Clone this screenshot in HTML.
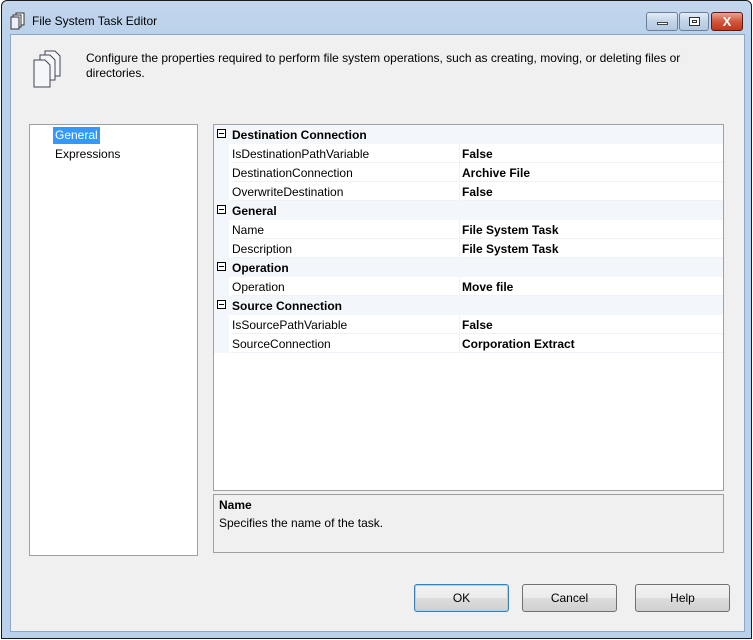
<!DOCTYPE html>
<html><head><style>
*{margin:0;padding:0;box-sizing:border-box}
body{width:753px;height:640px;background:#fff;position:relative;overflow:hidden;font-family:"Liberation Sans",sans-serif;font-size:12px;color:#000}
.win{position:absolute;left:1px;top:0;width:751px;height:639px;border:1px solid #1a1a1a;border-radius:6px 6px 0 0;background:linear-gradient(#c3d7ee,#b9d1ea 40px);}
.client{position:absolute;left:8px;top:33px;width:735px;height:598px;background:#f0f0f0;border:1px solid #8da7c4}
.title{position:absolute;left:30px;top:13px;font-size:12px}
.abs{position:absolute}
.btnc{position:absolute;top:11px;height:19px;border:1px solid #6d7f98;border-radius:3px;background:linear-gradient(#e3ecf6,#c3d4e8 50%,#b3c8e0)}
.pb{position:absolute;top:584px;width:95px;height:28px;border:1px solid #707070;border-radius:3px;background:linear-gradient(#f2f2f2,#ebebeb 50%,#dddddd 51%,#cfcfcf);text-align:center;line-height:26px}
.grid{position:absolute;left:213px;top:124px;width:511px;height:367px;border:1px solid #a0a0a0;background:#fff}
.row{position:absolute;left:0;width:509px;height:19px;line-height:20px}
.cat{background:#f3f6fb;font-weight:bold}
.prop{background:#fff}
.prop .g{position:absolute;left:0;top:0;width:15px;height:19px;background:#f3f6fb}
.prop .n{position:absolute;left:17px;top:0;width:227px;height:19px;border-bottom:1px solid #eef2f8;padding-left:1px}
.prop .v{position:absolute;left:245px;top:0;width:264px;height:19px;border-bottom:1px solid #eef2f8;border-left:1px solid #eef2f8;font-weight:bold;padding-left:2px}
.cat .t{position:absolute;left:18px}
.box{position:absolute;left:3px;top:4px;width:9px;height:9px;border:1px solid #000;background:#fff}
.box:after{content:"";position:absolute;left:1px;top:3px;width:5px;height:1px;background:#000}
</style></head><body>
<div class="win">
 <svg class="abs" style="left:8px;top:11px" width="18" height="18"><rect x="6" y="1" width="8" height="12" fill="#fff" stroke="#333"/><rect x="3" y="3" width="8" height="12" fill="#fff" stroke="#333"/><rect x="1" y="5" width="8" height="12" fill="#eef" stroke="#333"/></svg>
 <div class="title">File System Task Editor</div>
 <div class="btnc" style="left:644px;width:32px"><div class="abs" style="left:10px;top:9px;width:11px;height:3px;background:#fff;border:1px solid #444"></div></div>
 <div class="btnc" style="left:677px;width:30px"><div class="abs" style="left:9px;top:4px;width:11px;height:9px;background:#fff;border:1px solid #333"><div class="abs" style="left:2px;top:2px;width:5px;height:3px;border:1px solid #333"></div></div></div>
 <div class="btnc" style="left:709px;width:32px;border-color:#5a1c14;background:linear-gradient(#e8a493,#d3563c 50%,#c1361b)"><div class="abs" style="left:0;top:0;width:30px;text-align:center;color:#fff;font-weight:bold;font-size:13px;line-height:17px">X</div></div>
 <div class="client">
  <svg class="abs" style="left:22px;top:15px" width="30" height="40"><g stroke="#445" fill="#f4f6fa"><path d="M12 1h10l5 5v20H12z"/><path d="M7 5h10l5 5v20H7z"/><path d="M1 10h11l5 5v22H1z"/></g></svg>
  <div class="abs" style="left:75px;top:16px;line-height:15px;width:640px">Configure the properties required to perform file system operations, such as creating, moving, or deleting files or directories.</div>
 </div>
</div>
<div class="abs" style="left:29px;top:124px;width:169px;height:432px;background:#fff;border:1px solid #a0a0a0">
 <div class="abs" style="left:23px;top:2px;height:17px;padding:0 2px;background:#3399ff;color:#fff;line-height:17px">General</div>
 <div class="abs" style="left:25px;top:21px;line-height:17px">Expressions</div>
</div>
<div class="grid">
 <div class="row cat" style="top:0"><div class="box"></div><span class="t">Destination Connection</span></div>
 <div class="row prop" style="top:19px"><div class="g"></div><div class="n">IsDestinationPathVariable</div><div class="v">False</div></div>
 <div class="row prop" style="top:38px"><div class="g"></div><div class="n">DestinationConnection</div><div class="v">Archive File</div></div>
 <div class="row prop" style="top:57px"><div class="g"></div><div class="n">OverwriteDestination</div><div class="v">False</div></div>
 <div class="row cat" style="top:76px"><div class="box"></div><span class="t">General</span></div>
 <div class="row prop" style="top:95px"><div class="g"></div><div class="n">Name</div><div class="v">File System Task</div></div>
 <div class="row prop" style="top:114px"><div class="g"></div><div class="n">Description</div><div class="v">File System Task</div></div>
 <div class="row cat" style="top:133px"><div class="box"></div><span class="t">Operation</span></div>
 <div class="row prop" style="top:152px"><div class="g"></div><div class="n">Operation</div><div class="v">Move file</div></div>
 <div class="row cat" style="top:171px"><div class="box"></div><span class="t">Source Connection</span></div>
 <div class="row prop" style="top:190px"><div class="g"></div><div class="n">IsSourcePathVariable</div><div class="v">False</div></div>
 <div class="row prop" style="top:209px"><div class="g"></div><div class="n">SourceConnection</div><div class="v">Corporation Extract</div></div>
</div>
<div class="abs" style="left:213px;top:494px;width:511px;height:59px;border:1px solid #a0a0a0;background:#f0f0f0">
 <div class="abs" style="left:5px;top:3px;font-weight:bold">Name</div>
 <div class="abs" style="left:5px;top:21px">Specifies the name of the task.</div>
</div>
<div class="pb" style="left:414px;border-color:#3c7fb1;box-shadow:inset 0 0 0 1px #9fd4f3">OK</div>
<div class="pb" style="left:522px">Cancel</div>
<div class="pb" style="left:635px">Help</div>
</body></html>
